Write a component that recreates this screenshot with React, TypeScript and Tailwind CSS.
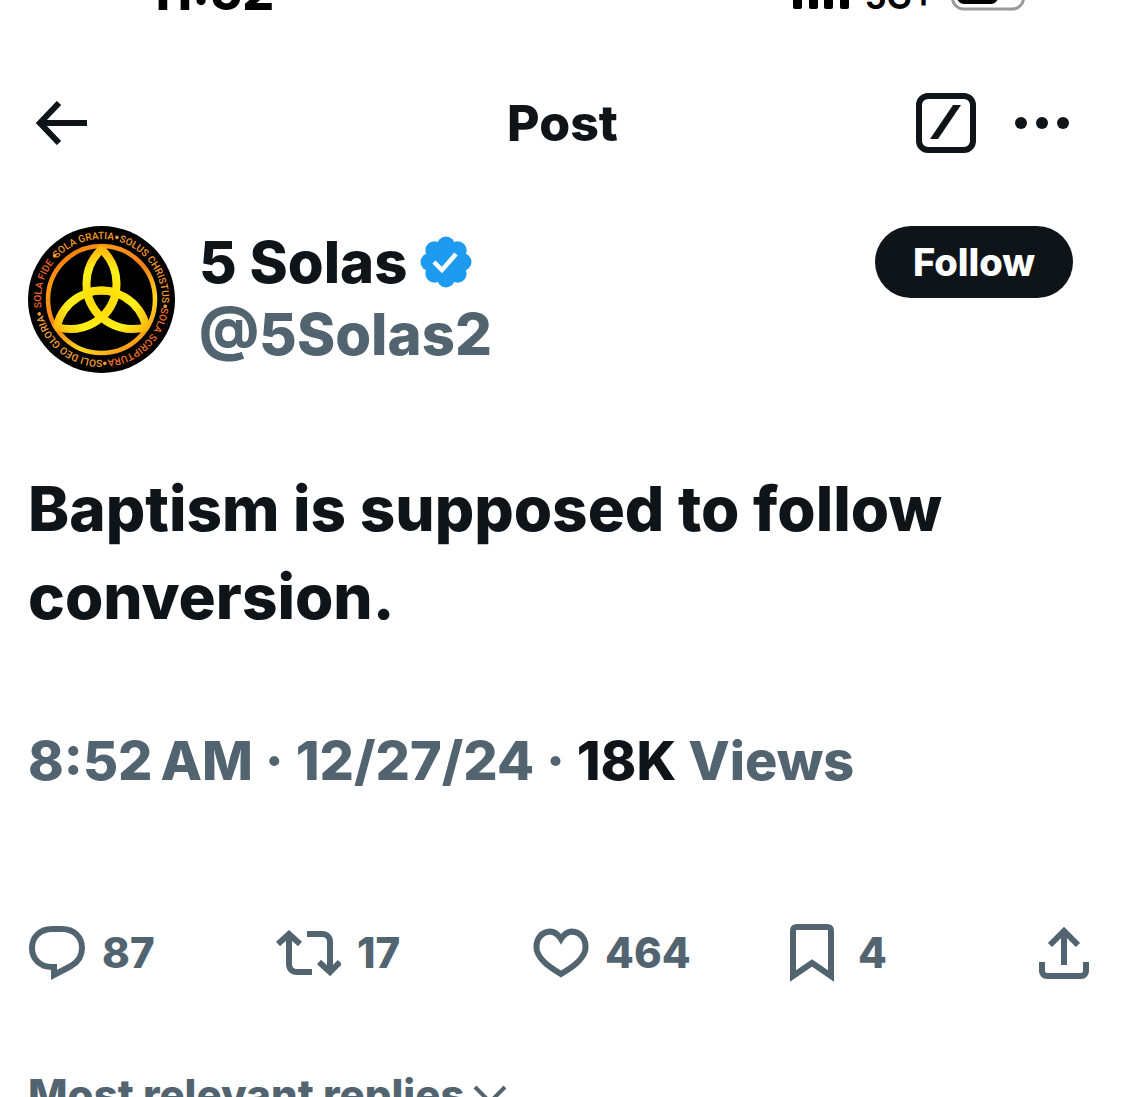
import type { ReactNode } from "react";

const ringWords = [
  { text: "SOLA GRATIA", angle: 162, color: "#f59a1c" },
  { text: "SOLUS CHRISTUS", angle: 235, color: "#f39a2a" },
  { text: "SOLA SCRIPTURA", angle: 316, color: "#f0702a" },
  { text: "SOLI DEO GLORIA", angle: 37, color: "#f7a43a" },
  { text: "SOLA FIDE", angle: 105, color: "#f0642a" },
];

const ringDots = [14, 96, 177, 257, 313];

const lobe = "M73.5 23C54 42 53 72 73.5 92C94 72 93 42 73.5 23Z";

function Avatar() {
  return (
    <svg viewBox="0 0 147 147" className="size-[147px] shrink-0" role="img" aria-label="5 Solas">
      <defs>
        <linearGradient id="ring" x1="0" y1="0" x2="0.7" y2="1">
          <stop offset="0" stopColor="#ee5a12" />
          <stop offset="0.25" stopColor="#fb9a12" />
          <stop offset="0.55" stopColor="#f4801a" />
          <stop offset="0.8" stopColor="#ffd81a" />
          <stop offset="1" stopColor="#fb9a18" />
        </linearGradient>
        <radialGradient id="knot" gradientUnits="userSpaceOnUse" cx="73.5" cy="75" r="54">
          <stop offset="0" stopColor="#ffd400" />
          <stop offset="0.6" stopColor="#fff01a" />
          <stop offset="1" stopColor="#ffb30a" />
        </radialGradient>
        {/* starts at the bottom and runs clockwise, so no word crosses the seam */}
        <path id="rim" d="M73.5 134a60.5 60.5 0 0 1 0-121a60.5 60.5 0 0 1 0 121" />
      </defs>
      <circle cx="73.5" cy="73.5" r="73.5" fill="#000" />
      <circle cx="73.5" cy="73.5" r="53.5" fill="none" stroke="url(#ring)" strokeWidth="4.5" />
      <g fill="none" stroke="url(#knot)" strokeWidth="8" strokeLinejoin="bevel">
        <path d={lobe} />
        <path d={lobe} transform="rotate(120 73.5 75)" />
        <path d={lobe} transform="rotate(240 73.5 75)" />
      </g>
      {ringWords.map((w) => (
        <text
          key={w.text}
          fill={w.color}
          textAnchor="middle"
          className="font-['Roboto',sans-serif] text-[10px] font-medium"
        >
          <textPath href="#rim" startOffset={`${(w.angle / 360) * 100}%`}>
            {w.text}
          </textPath>
        </text>
      ))}
      {ringDots.map((a) => (
        <circle key={a} cx="73.5" cy="9.5" r="1.8" fill="#f59a3a" transform={`rotate(${a} 73.5 73.5)`} />
      ))}
    </svg>
  );
}

function VerifiedBadge() {
  return (
    <svg viewBox="0 0 52 52" className="size-[52px] shrink-0" role="img" aria-label="Verified">
      <g fill="#1d9bf0">
        <circle cx="26" cy="26" r="21" />
        {[0, 45, 90, 135, 180, 225, 270, 315].map((a) => (
          <circle key={a} cx="26" cy="9.5" r="9" transform={`rotate(${a} 26 26)`} />
        ))}
      </g>
      <path d="M14 26l8 8L36 18" fill="none" stroke="#fff" strokeWidth="4.5" />
    </svg>
  );
}

function Action({ label, count, children }: { label: string; count?: string; children: ReactNode }) {
  return (
    <button type="button" aria-label={label} className="flex items-center gap-4">
      {children}
      {count && <span>{count}</span>}
    </button>
  );
}

export default function App() {
  return (
    <div className="h-screen overflow-hidden bg-white font-['Inter',sans-serif] font-extrabold text-[#0f1419]">
      <div className="flex h-4 items-end justify-between overflow-hidden pr-[100px] pl-[148px] text-black">
        <span className="text-[50px] leading-[48px]">11:52</span>
        <div className="flex items-end">
          <svg viewBox="0 0 56 16" className="mr-4 h-4 w-14" aria-hidden="true">
            {[0, 16, 31, 47].map((x) => (
              <rect key={x} x={x} y="-12" width="9" height="21" rx="2" />
            ))}
          </svg>
          <span className="mr-4 text-[34px] leading-[38px] font-bold">5G+</span>
          <svg viewBox="0 0 74 16" className="h-4 w-[74px]" aria-hidden="true">
            <rect x="1.5" y="-26" width="71" height="35" rx="11" fill="none" stroke="#999" strokeWidth="3" />
            <rect x="6" y="-22" width="41" height="26" rx="7" />
          </svg>
        </div>
      </div>

      <header className="grid h-[210px] grid-cols-3 items-center px-9 pt-1">
        <button type="button" aria-label="Back">
          <svg viewBox="0 0 52 44" className="h-11 w-[52px]" fill="none" stroke="currentColor" strokeWidth="6">
            <path d="M23 2L4 22l19 20M4 22h47" />
          </svg>
        </button>
        <h1 className="text-center text-[50px] leading-[56px]">Post</h1>
        <div className="mr-5 flex items-center justify-end gap-[39px]">
          <button type="button" aria-label="Grok">
            <svg viewBox="0 0 60 60" className="size-[60px]">
              <rect x="3" y="3" width="54" height="54" rx="9" fill="none" stroke="currentColor" strokeWidth="6" />
              <path d="M37 12h8L22 46h-8z" fill="currentColor" />
            </svg>
          </button>
          <button type="button" aria-label="More">
            <svg viewBox="0 0 54 12" className="h-3 w-[54px]" fill="currentColor">
              <circle cx="6" cy="6" r="6" />
              <circle cx="27" cy="6" r="6" />
              <circle cx="48" cy="6" r="6" />
            </svg>
          </button>
        </div>
      </header>

      <article className="px-7">
        <div className="flex items-start">
          <Avatar />
          <div className="ml-6 flex-1 text-[58px] leading-[72px]">
            <div className="flex items-center gap-3">
              <h2>5 Solas</h2>
              <VerifiedBadge />
            </div>
            <div className="text-[#536471]">@5Solas2</div>
          </div>
          <button type="button" className="mr-6 h-[72px] w-[198px] rounded-full bg-[#0f1419] text-[38px] text-white">
            Follow
          </button>
        </div>

        <p className="mt-[92px] text-[62px] leading-[88px]">Baptism is supposed to follow conversion.</p>

        <p className="mt-[80px] text-[54px] leading-[80px] text-[#536471]">
          8:52{"\u202f"}AM · 12/27/24 · <span className="text-[#0f1419]">18K</span> Views
        </p>

        <div className="mt-[116px] grid grid-cols-[248fr_257fr_257fr_249fr_50px] items-center pr-2 text-[42px] leading-[72px] text-[#536471]">
          <Action label="Reply" count="87">
            <svg viewBox="0 0 58 56" className="h-14 w-[58px]" fill="none" stroke="currentColor" strokeWidth="6">
              <path d="M24 4h10c12 0 20 8 20 19 0 8-4 14-11 18L26 50v-8h-2C12 42 4 34 4 23S12 4 24 4z" />
            </svg>
          </Action>
          <Action label="Repost" count="17">
            <svg viewBox="0 0 65 46" className="h-[46px] w-[65px]" fill="none" stroke="currentColor" strokeWidth="6">
              <path d="M2 14L13 4l11 10M13 5v29c0 5 3 8 8 8h15M31 4h15c5 0 8 3 8 8v28M43 32l11 10 10-10" />
            </svg>
          </Action>
          <Action label="Like" count="464">
            <svg viewBox="0 0 56 50" className="h-[50px] w-14" fill="none" stroke="currentColor" strokeWidth="6">
              <path d="M28 11C33 3 38 3 42 4c8 2 12 10 10 19C49 33 38 40 28 46 18 40 7 33 4 23 2 14 6 6 14 4c4-1 9-1 14 7z" />
            </svg>
          </Action>
          <Action label="Bookmark" count="4">
            <svg viewBox="0 0 52 58" className="h-[58px] w-[52px]" fill="none" stroke="currentColor" strokeWidth="6">
              <path d="M3 52V7c0-3 1-4 4-4h30c3 0 4 1 4 4v45L22 39z" />
            </svg>
          </Action>
          <Action label="Share">
            <svg viewBox="0 0 50 52" className="h-[52px] w-[50px]" fill="none" stroke="currentColor" strokeWidth="6">
              <path d="M11 18L25 4l14 14M25 4v34M3 35v9c0 3 2 5 5 5h34c3 0 5-2 5-5v-9" />
            </svg>
          </Action>
        </div>
      </article>

      <button type="button" className="mt-[78px] ml-7 flex items-center gap-2 text-[42px] leading-[56px] text-[#536471]">
        Most relevant replies
        <svg viewBox="0 0 34 20" className="h-5 w-[34px]" fill="none" stroke="currentColor" strokeWidth="4">
          <path d="M2 2l15 15L32 2" />
        </svg>
      </button>
    </div>
  );
}
